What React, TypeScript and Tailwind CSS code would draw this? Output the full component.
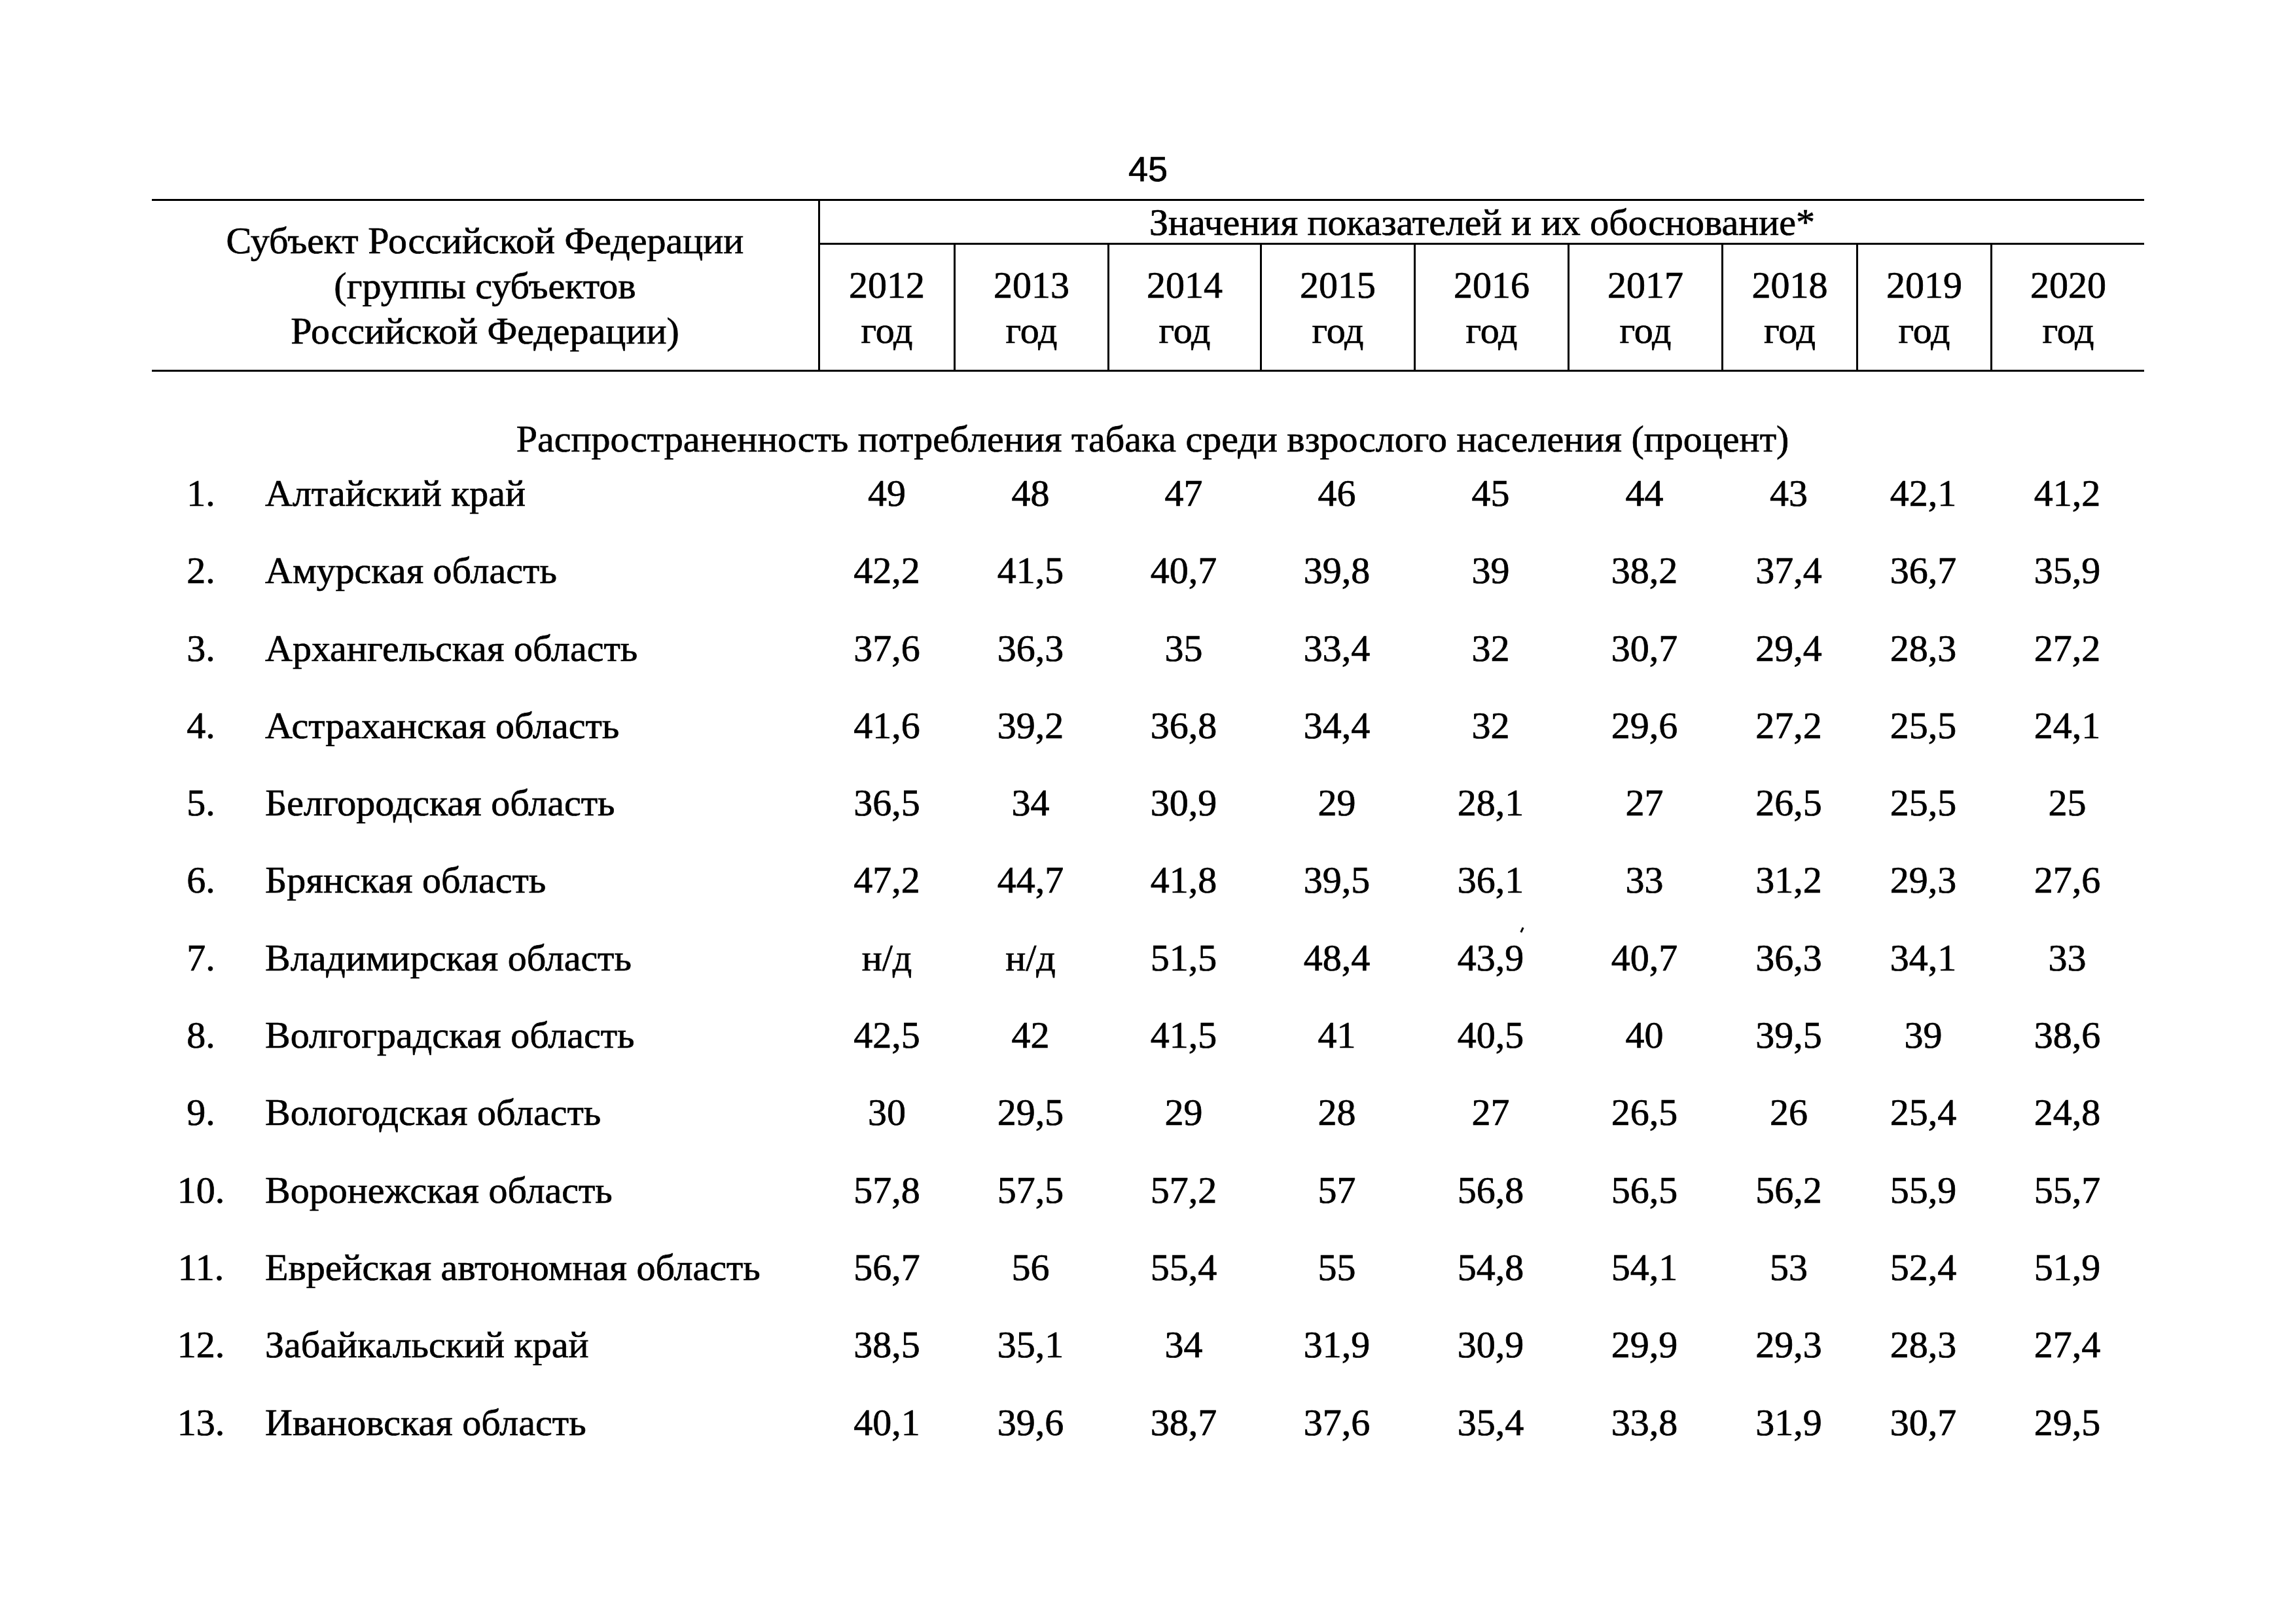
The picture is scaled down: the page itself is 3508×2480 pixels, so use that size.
const years = ["2012", "2013", "2014", "2015", "2016", "2017", "2018", "2019", "2020"];

// column widths, in order, so body values line up under the header cells
const widths = [
  "w-[204px]",
  "w-[235px]",
  "w-[233px]",
  "w-[235px]",
  "w-[235px]",
  "w-[235px]",
  "w-[206px]",
  "w-[205px]",
  "w-[235px]",
];

const rows: [string, string[]][] = [
  ["Алтайский край", ["49", "48", "47", "46", "45", "44", "43", "42,1", "41,2"]],
  ["Амурская область", ["42,2", "41,5", "40,7", "39,8", "39", "38,2", "37,4", "36,7", "35,9"]],
  ["Архангельская область", ["37,6", "36,3", "35", "33,4", "32", "30,7", "29,4", "28,3", "27,2"]],
  ["Астраханская область", ["41,6", "39,2", "36,8", "34,4", "32", "29,6", "27,2", "25,5", "24,1"]],
  ["Белгородская область", ["36,5", "34", "30,9", "29", "28,1", "27", "26,5", "25,5", "25"]],
  ["Брянская область", ["47,2", "44,7", "41,8", "39,5", "36,1", "33", "31,2", "29,3", "27,6"]],
  ["Владимирская область", ["н/д", "н/д", "51,5", "48,4", "43,9", "40,7", "36,3", "34,1", "33"]],
  ["Волгоградская область", ["42,5", "42", "41,5", "41", "40,5", "40", "39,5", "39", "38,6"]],
  ["Вологодская область", ["30", "29,5", "29", "28", "27", "26,5", "26", "25,4", "24,8"]],
  ["Воронежская область", ["57,8", "57,5", "57,2", "57", "56,8", "56,5", "56,2", "55,9", "55,7"]],
  ["Еврейская автономная область", ["56,7", "56", "55,4", "55", "54,8", "54,1", "53", "52,4", "51,9"]],
  ["Забайкальский край", ["38,5", "35,1", "34", "31,9", "30,9", "29,9", "29,3", "28,3", "27,4"]],
  ["Ивановская область", ["40,1", "39,6", "38,7", "37,6", "35,4", "33,8", "31,9", "30,7", "29,5"]],
];

export default function App() {
  return (
    <div className="w-[3508px] h-[2480px] bg-white text-black font-['Liberation_Serif','Times_New_Roman',serif] text-[58px] leading-[69px] [-webkit-text-stroke:0.7px_black] overflow-hidden">
      <div className="ml-[232px] w-[3044px] pt-[228px]">
        <div className="h-[60px] text-center leading-[60px] text-[54px] font-['Liberation_Sans_Narrow','Liberation_Sans',sans-serif]">
          45
        </div>

        <div className="mt-[16px] flex border-y-[3px] border-black">
          <div className="w-[1018px] flex flex-col items-center justify-center text-center">
            <div>Субъект Российской Федерации</div>
            <div>(группы субъектов</div>
            <div>Российской Федерации)</div>
          </div>
          <div className="flex-1 flex flex-col border-l-[3px] border-black">
            <div className="h-[67px] flex items-center justify-center border-b-[3px] border-black">
              Значения показателей и их обоснование*
            </div>
            <div className="h-[191px] flex">
              {years.map((y, i) => (
                <div
                  key={y}
                  className={`${widths[i]} ${i ? "border-l-[3px] border-black" : ""} flex flex-col items-center justify-center`}
                >
                  <div>{y}</div>
                  <div>год</div>
                </div>
              ))}
            </div>
          </div>
        </div>

        <div className="mt-[68px] pl-[14px] text-center">
          Распространенность потребления табака среди взрослого населения (процент)
        </div>

        <div className="mt-[14px] flex flex-col gap-[49.3px]">
          {rows.map(([name, vals], r) => (
            <div key={name} className="flex">
              <div className="w-[150px] text-center">{r + 1}.</div>
              <div className="w-[871px] pl-[23px]">{name}</div>
              {vals.map((v, i) => (
                <div key={i} className={`${widths[i]} text-center relative`}>
                  {r === 6 && i === 4 && (
                    <span className="absolute left-[164px] top-[-12px] w-[3px] h-[8px] bg-black rotate-[25deg]" />
                  )}
                  {v}
                </div>
              ))}
            </div>
          ))}
        </div>
      </div>
    </div>
  );
}
